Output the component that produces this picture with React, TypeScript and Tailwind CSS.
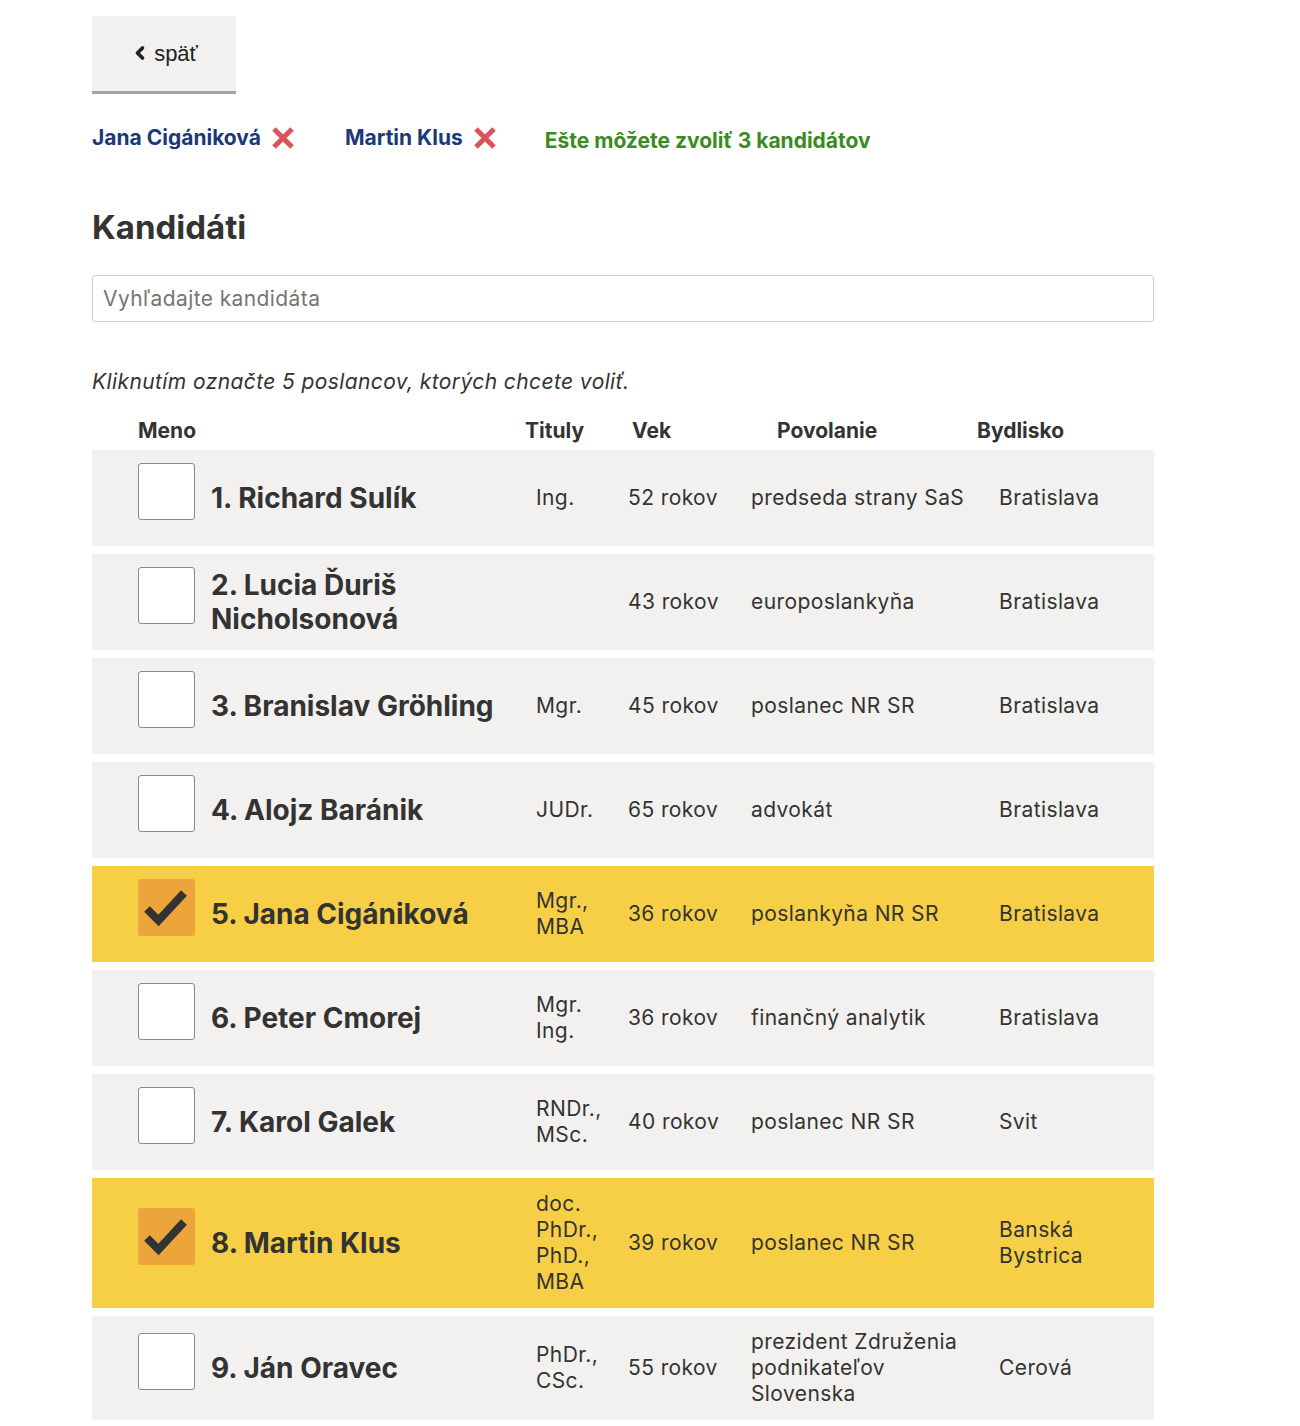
import { ChevronLeft } from "lucide-react";

type Candidate = {
  name: string;
  titles: string[];
  age: string;
  job: string;
  town: string;
  checked?: boolean;
};

const candidates: Candidate[] = [
  { name: "1. Richard Sulík", titles: ["Ing."], age: "52 rokov", job: "predseda strany SaS", town: "Bratislava" },
  { name: "2. Lucia Ďuriš Nicholsonová", titles: [], age: "43 rokov", job: "europoslankyňa", town: "Bratislava" },
  { name: "3. Branislav Gröhling", titles: ["Mgr."], age: "45 rokov", job: "poslanec NR SR", town: "Bratislava" },
  { name: "4. Alojz Baránik", titles: ["JUDr."], age: "65 rokov", job: "advokát", town: "Bratislava" },
  { name: "5. Jana Cigániková", titles: ["Mgr.,", "MBA"], age: "36 rokov", job: "poslankyňa NR SR", town: "Bratislava", checked: true },
  { name: "6. Peter Cmorej", titles: ["Mgr.", "Ing."], age: "36 rokov", job: "finančný analytik", town: "Bratislava" },
  { name: "7. Karol Galek", titles: ["RNDr.,", "MSc."], age: "40 rokov", job: "poslanec NR SR", town: "Svit" },
  { name: "8. Martin Klus", titles: ["doc.", "PhDr.,", "PhD.,", "MBA"], age: "39 rokov", job: "poslanec NR SR", town: "Banská Bystrica", checked: true },
  { name: "9. Ján Oravec", titles: ["PhDr.,", "CSc."], age: "55 rokov", job: "prezident Združenia podnikateľov Slovenska", town: "Cerová" },
];

function RedX() {
  return (
    <svg width="24" height="24" viewBox="0 0 24 24" className="shrink-0">
      <path d="M3 3 L21 21 M21 3 L3 21" stroke="#d9545b" strokeWidth="5" />
    </svg>
  );
}

// the box sits a bit above the row's middle, like in the original
function Checkbox({ checked }: { checked?: boolean }) {
  if (checked) {
    return (
      <div className="mb-[12px] h-[57px] w-[57px] shrink-0 rounded-[3px] bg-[#eba53a]">
        <svg width="57" height="57" viewBox="0 0 57 57">
          <polyline points="9,30 20.5,41.5 46,14" fill="none" stroke="#333333" strokeWidth="8" />
        </svg>
      </div>
    );
  }
  return <div className="mb-[12px] h-[57px] w-[57px] shrink-0 rounded-[3px] border border-[#8a8a8a] bg-white" />;
}

export default function App() {
  return (
    <div className="min-h-[1426px] bg-white font-['Inter',sans-serif] text-[#333]">
      <div className="box-content w-[1062px] pl-[92px] pt-[16px]">
        <button
          type="button"
          className="flex h-[78px] w-[144px] items-center justify-center gap-[4px] border-b-[3px] border-[#a3a3a3] bg-[#f2f1ef] font-['Liberation_Sans',Arial,sans-serif] text-[22px] text-[#222]"
        >
          <ChevronLeft size={20} strokeWidth={4.5} className="-mt-[2px]" />
          <span>späť</span>
        </button>

        <div className="mt-[25px] flex items-center text-[21px] font-bold">
          <span className="flex items-center gap-[10px] text-[#1d3877]">
            Jana Cigániková
            <RedX />
          </span>
          <span className="ml-[50px] flex items-center gap-[10px] text-[#1d3877]">
            Martin Klus
            <RedX />
          </span>
          <span className="ml-[48px] mt-[6px] text-[#3b8a22]">Ešte môžete zvoliť 3 kandidátov</span>
        </div>

        <h2 className="mt-[50px] text-[33px] font-bold leading-[40px]">Kandidáti</h2>

        <input
          type="text"
          placeholder="Vyhľadajte kandidáta"
          className="mt-[28px] h-[47px] w-full rounded-[3px] border border-[#cccccc] px-[10px] text-[21px] tracking-[0.4px] outline-none placeholder:text-[#757575]"
        />

        <p className="mt-[46px] text-[21px] italic leading-[28px] tracking-[0.4px]">
          Kliknutím označte 5 poslancov, ktorých chcete voliť.
        </p>

        <div className="mt-[22px] grid grid-cols-[433px_107px_145px_200px_1fr] text-[21px] font-bold leading-[26px]">
          <span className="pl-[46px]">Meno</span>
          <span>Tituly</span>
          <span>Vek</span>
          <span>Povolanie</span>
          <span>Bydlisko</span>
        </div>

        <div className="mt-[6px] flex flex-col gap-[8px]">
          {candidates.map((c) => (
            <div
              key={c.name}
              className={`grid min-h-[96px] grid-cols-[444px_92px_123px_248px_1fr] items-center py-[13px] text-[21px] leading-[26px] tracking-[0.4px] ${
                c.checked ? "bg-[#f7cf46]" : "bg-[#f2f1ef]"
              }`}
            >
              <div className="flex items-center gap-[16px] pl-[46px] pr-[20px]">
                <Checkbox checked={c.checked} />
                <span className="text-[28px] font-bold leading-[34px] tracking-normal">{c.name}</span>
              </div>
              <div className="flex flex-col pr-[16px]">
                {c.titles.map((t) => (
                  <span key={t}>{t}</span>
                ))}
              </div>
              <div className="pr-[16px]">{c.age}</div>
              <div className="pr-[24px]">{c.job}</div>
              <div className="pr-[16px]">{c.town}</div>
            </div>
          ))}
        </div>
      </div>
    </div>
  );
}
